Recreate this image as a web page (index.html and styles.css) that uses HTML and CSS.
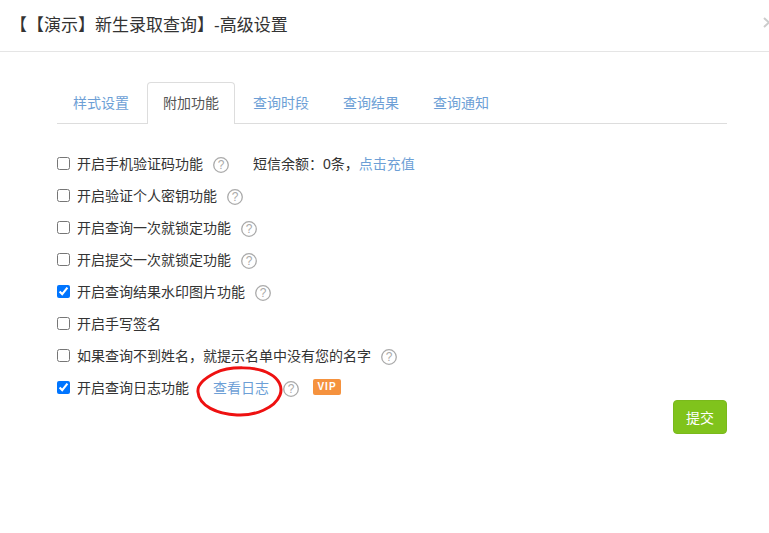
FILE: index.html
```html
<!DOCTYPE html>
<html lang="zh-CN">
<head>
  <meta charset="utf-8">
  <title>高级设置</title>
  <link rel="stylesheet" href="styles.css">
</head>
<body>
  <div class="modal-header">
    <h1>【【演示】新生录取查询】-高级设置</h1>
    <svg class="close-icon" width="8" height="11" viewBox="0 0 8 11"><path d="M1 1l5 4.5L1 10" fill="none" stroke="#ccc" stroke-width="2"/></svg>
  </div>

  <div class="content">
    <ul class="tabs">
      <li><a href="#">样式设置</a></li>
      <li class="active"><a href="#">附加功能</a></li>
      <li><a href="#">查询时段</a></li>
      <li><a href="#">查询结果</a></li>
      <li><a href="#">查询通知</a></li>
    </ul>

    <div class="options">
      <div class="option">
        <input type="checkbox"><span>开启手机验证码功能</span>
        <svg class="help" viewBox="0 0 16 16"><circle cx="8" cy="8" r="7.3"/><text x="8" y="12.3" text-anchor="middle">?</text></svg>
        <span class="sms">短信余额：0条，<a href="#">点击充值</a></span>
      </div>
      <div class="option">
        <input type="checkbox"><span>开启验证个人密钥功能</span>
        <svg class="help" viewBox="0 0 16 16"><circle cx="8" cy="8" r="7.3"/><text x="8" y="12.3" text-anchor="middle">?</text></svg>
      </div>
      <div class="option">
        <input type="checkbox"><span>开启查询一次就锁定功能</span>
        <svg class="help" viewBox="0 0 16 16"><circle cx="8" cy="8" r="7.3"/><text x="8" y="12.3" text-anchor="middle">?</text></svg>
      </div>
      <div class="option">
        <input type="checkbox"><span>开启提交一次就锁定功能</span>
        <svg class="help" viewBox="0 0 16 16"><circle cx="8" cy="8" r="7.3"/><text x="8" y="12.3" text-anchor="middle">?</text></svg>
      </div>
      <div class="option">
        <input type="checkbox" checked><span>开启查询结果水印图片功能</span>
        <svg class="help" viewBox="0 0 16 16"><circle cx="8" cy="8" r="7.3"/><text x="8" y="12.3" text-anchor="middle">?</text></svg>
      </div>
      <div class="option">
        <input type="checkbox"><span>开启手写签名</span>
      </div>
      <div class="option">
        <input type="checkbox"><span>如果查询不到姓名，就提示名单中没有您的名字</span>
        <svg class="help" viewBox="0 0 16 16"><circle cx="8" cy="8" r="7.3"/><text x="8" y="12.3" text-anchor="middle">?</text></svg>
      </div>
      <div class="option">
        <input type="checkbox" checked><span>开启查询日志功能</span>
        <a class="log-link" href="#">查看日志</a>
        <svg class="help help-log" viewBox="0 0 16 16"><circle cx="8" cy="8" r="7.3"/><text x="8" y="12.3" text-anchor="middle">?</text></svg>
        <span class="vip">VIP</span>
        <!-- 红色圈 -->
        <svg class="red-circle" width="90" height="54" viewBox="0 0 90 54"><path d="M20 8C34 1 62 1 75 9c9 5 13 13 10 21-5 13-25 21-43 20C22 49 4 41 3 27 2 19 10 13 20 8z" fill="none" stroke="#ee1111" stroke-width="3"/></svg>
      </div>
    </div>

    <div class="actions">
      <button class="submit">提交</button>
    </div>
  </div>
</body>
</html>
```

FILE: styles.css
```css
* { margin: 0; padding: 0; box-sizing: border-box; }
body {
  font-family: "Liberation Sans", "Noto Sans CJK SC", sans-serif;
  font-size: 14px;
  color: #333;
  background: #fff;
  overflow: hidden;
  text-spacing-trim: space-all;
}
a {
  color: #6d9fd6;
  text-decoration: none;
}
.modal-header {
  height: 52px;
  padding-left: 10px;
  border-bottom: 1px solid #e5e5e5;
  display: flex;
  align-items: center;
  justify-content: space-between;
}
.modal-header h1 {
  font-size: 17px;
  font-weight: normal;
  line-height: 50px;
  color: #333;
}
.close-icon {
  margin-right: -2px;
  margin-top: -7px;
}
.content {
  padding: 30px 42px 0 57px;
}
.tabs {
  list-style: none;
  display: flex;
  gap: 2px;
  height: 42px;
  border-bottom: 1px solid #ddd;
}
.tabs li a {
  display: block;
  height: 42px;
  padding: 0 15px;
  line-height: 40px;
  border: 1px solid transparent;
  border-bottom: none;
  border-radius: 4px 4px 0 0;
}
.tabs li.active a {
  color: #555;
  background: #fff;
  border-color: #ddd;
}
.options {
  padding-top: 24px;
}
.option {
  position: relative;
  height: 32px;
  display: flex;
  align-items: center;
  line-height: 32px;
}
.option input {
  width: 13px;
  height: 13px;
  margin: 0 7px 2px 0;
  flex: none;
}
.help {
  width: 16px;
  height: 16px;
  margin-left: 10px;
  margin-top: 2px;
  flex: none;
}
.help circle {
  fill: none;
  stroke: #aaa;
  stroke-width: 1.3;
}
.help text {
  font-size: 12px;
  fill: #aaa;
}
.sms {
  margin-left: 24px;
}
.log-link {
  margin-left: 24px;
}
.help-log {
  margin-left: 14px;
}
.vip {
  width: 28px;
  height: 16px;
  margin-left: 14px;
  margin-top: -2px;
  border-radius: 2px;
  background: #f5923e;
  color: #fff;
  font-size: 10px;
  font-weight: bold;
  line-height: 16px;
  text-align: center;
  letter-spacing: 1px;
}
.red-circle {
  position: absolute;
  left: 138px;
  top: -7px;
}
.actions {
  display: flex;
  justify-content: flex-end;
  margin-top: -4px;
}
.submit {
  width: 54px;
  height: 34px;
  border: 1px solid #7ab91c;
  border-radius: 4px;
  background: #80c31c;
  color: #fff;
  font-family: inherit;
  font-size: 14px;
}
```
